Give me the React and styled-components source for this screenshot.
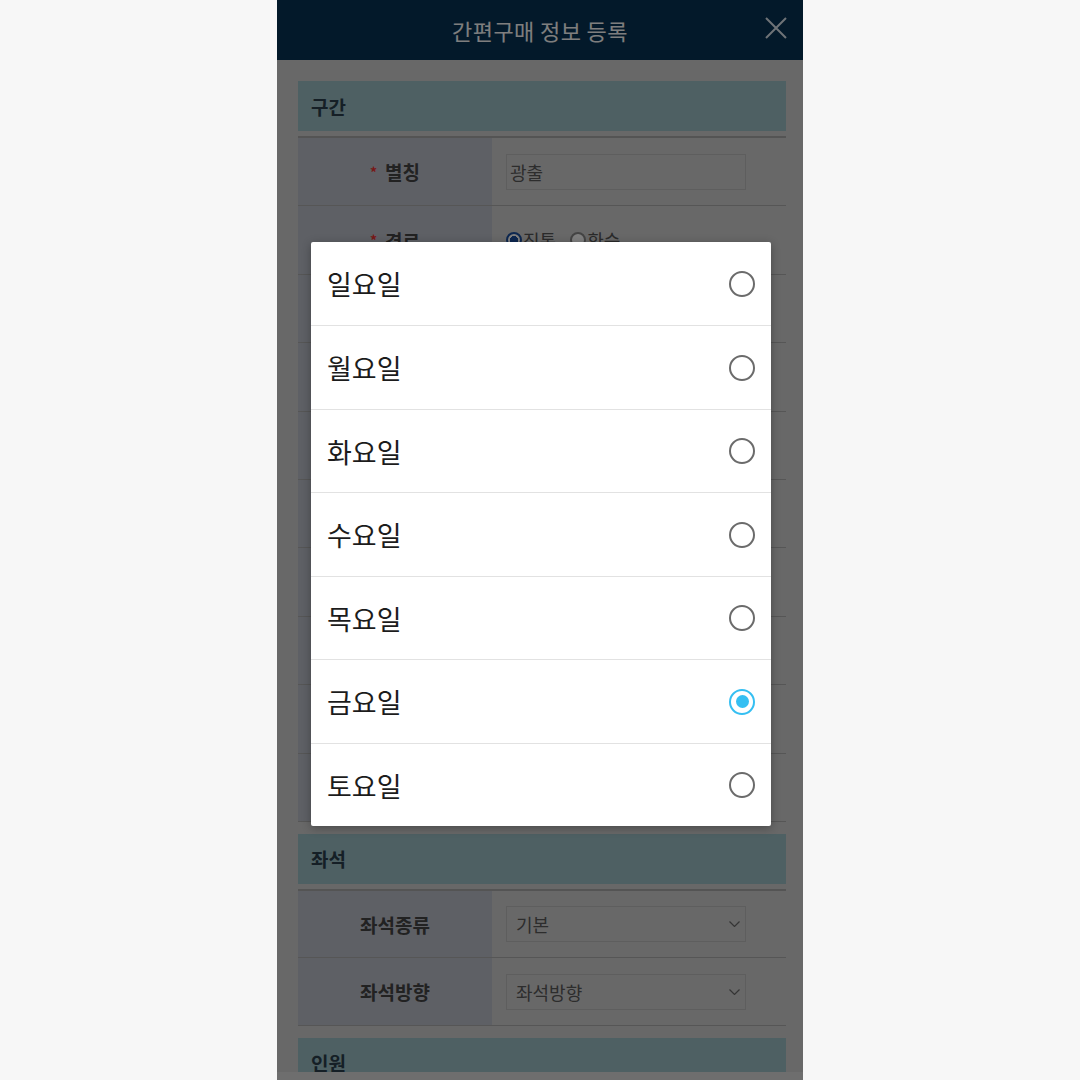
import styled, { createGlobalStyle } from "styled-components"
import { useState } from "react"

const GlobalStyle = createGlobalStyle`
    html, body {
        margin: 0;
        padding: 0;
        background-color: #f7f7f7;
        font-family: "Noto Sans CJK KR", "Noto Sans", sans-serif;
    }
    * {
        box-sizing: border-box;
    }
`

const days = ["일요일", "월요일", "화요일", "수요일", "목요일", "금요일", "토요일"]

const routeRows = [
    { label: "별칭", required: true, kind: "input", value: "광출" },
    { label: "경로", required: true, kind: "radio" },
    { label: "출발역", required: true, kind: "input", value: "서울" },
    { label: "도착역", required: true, kind: "input", value: "부산" },
    { label: "열차종류", required: false, kind: "select", value: "KTX" },
    { label: "출발시간", required: true, kind: "select", value: "07시" },
    { label: "요일", required: true, kind: "select", value: "금요일" },
    { label: "열차번호", required: false, kind: "input", value: "" },
    { label: "출발일", required: false, kind: "input", value: "" },
    { label: "반복", required: false, kind: "select", value: "매주" },
]

const seatRows = [
    { label: "좌석종류", kind: "select", value: "기본" },
    { label: "좌석방향", kind: "select", value: "좌석방향" },
]

function Chevron() {
    return (
        <svg width="11" height="6" viewBox="0 0 11 6">
            <polyline points="0.5,0.5 5.5,5.5 10.5,0.5" fill="none" stroke="#6a6a6a" strokeWidth="1.2" />
        </svg>
    )
}

function FormRow({ row, height }) {
    return (
        <Row height={height}>
            <Label>
                {row.required && <Star>*</Star>}
                {row.label}
            </Label>
            <Value>
                {row.kind === "input" && <Field>{row.value}</Field>}
                {row.kind === "select" && (
                    <Field select>
                        {row.value}
                        <Chevron />
                    </Field>
                )}
                {row.kind === "radio" && (
                    <RadioGroup>
                        <RadioItem><SmallRadio checked />직통</RadioItem>
                        <RadioItem><SmallRadio />환승</RadioItem>
                    </RadioGroup>
                )}
            </Value>
        </Row>
    )
}

export default function App() {
    const [selected, setSelected] = useState(5)

    return (
        <>
            <GlobalStyle />
            <Page>
                <Phone>
                    <Header>
                        <Title>간편구매 정보 등록</Title>
                        <Close>
                            <svg width="22" height="22" viewBox="0 0 22 22">
                                <path d="M1 1 L21 21 M21 1 L1 21" stroke="#dfe6ee" strokeWidth="2" />
                            </svg>
                        </Close>
                    </Header>
                    <Content>
                        <SectionTitle>구간</SectionTitle>
                        <Table>
                            {routeRows.map(r => <FormRow key={r.label} row={r} height={68.4} />)}
                        </Table>
                        <SectionTitle>좌석</SectionTitle>
                        <Table>
                            {seatRows.map(r => <FormRow key={r.label} row={r} height={67.5} />)}
                        </Table>
                        <SectionTitle>인원</SectionTitle>
                    </Content>
                    <BottomBar />
                    <Overlay>
                        <Dialog>
                            {days.map((d, i) => (
                                <DayOption key={d} onClick={() => setSelected(i)}>
                                    <DayName>{d}</DayName>
                                    <Radio checked={i === selected} />
                                </DayOption>
                            ))}
                        </Dialog>
                    </Overlay>
                </Phone>
            </Page>
        </>
    )
}

const Page = styled.div`
    display: flex;
    justify-content: center;
    height: 100vh;
`

const Phone = styled.div`
    position: relative;
    width: 526px;
    height: 1080px;
    display: flex;
    flex-direction: column;
    overflow: hidden;
    background-color: #d0d0d0;
`

const Header = styled.div`
    height: 60px;
    flex-shrink: 0;
    background-color: #063254;
    display: flex;
    align-items: center;
    justify-content: center;
    position: relative;
`

const Title = styled.h1`
    margin: 0;
    font-size: 22px;
    font-weight: 400;
    color: #fcfcfc;
    letter-spacing: 0.4px;
`

const Close = styled.div`
    position: absolute;
    right: 16px;
    top: 17px;
    display: flex;
`

const Content = styled.div`
    flex: 1;
    overflow: hidden;
    padding: 21px 17px 0 21px;
    display: flex;
    flex-direction: column;
`

const SectionTitle = styled.div`
    height: 50px;
    flex-shrink: 0;
    background-color: #9cc0c6;
    display: flex;
    align-items: center;
    padding-left: 13px;
    font-size: 19px;
    font-weight: 700;
    color: #2a3f4c;
`

const Table = styled.div`
    margin: 5px 0 12px;
    border-top: 2px solid #a8a8a8;
    display: flex;
    flex-direction: column;
    flex-shrink: 0;
`

const Row = styled.div`
    height: ${props => props.height}px;
    display: flex;
    border-bottom: 1px solid #acacac;
`

const Label = styled.div`
    width: 194px;
    background-color: #bcc0ca;
    display: flex;
    align-items: center;
    justify-content: center;
    font-size: 19px;
    font-weight: 700;
    color: #444;
`

const Star = styled.span`
    color: #f03030;
    font-size: 14px;
    margin-right: 8px;
`

const Value = styled.div`
    flex: 1;
    display: flex;
    align-items: center;
    padding-left: 14px;
`

const Field = styled.div`
    width: 240px;
    height: 36px;
    border: 1px solid #bdbdbd;
    display: flex;
    align-items: center;
    justify-content: space-between;
    padding: 0 5px 0 ${props => props.select ? "9px" : "3px"};
    font-size: 18px;
    color: #5a5a5a;
`

const RadioGroup = styled.div`
    display: flex;
    align-items: center;
    gap: 14px;
    font-size: 18px;
    color: #555;
`

const RadioItem = styled.label`
    display: flex;
    align-items: center;
    gap: 1px;
`

const SmallRadio = styled.span`
    width: 16px;
    height: 16px;
    border-radius: 50%;
    border: 2px solid ${props => props.checked ? "#1a4fa0" : "#888"};
    background: ${props => props.checked ? "radial-gradient(circle, #1a4fa0 45%, #fff 50%)" : "#fff"};
`

const BottomBar = styled.div`
    height: 8px;
    flex-shrink: 0;
    background-color: #dcdcdc;
`

const Overlay = styled.div`
    position: absolute;
    inset: 0;
    background-color: rgba(0, 0, 0, 0.5);
    display: flex;
    align-items: center;
    justify-content: center;
    padding: 0 0 12px 2px;
`

const Dialog = styled.div`
    width: 460px;
    background-color: #fff;
    border-radius: 2px;
    box-shadow: 0 2px 10px rgba(0, 0, 0, 0.3);
    display: flex;
    flex-direction: column;
`

const DayOption = styled.div`
    height: 83.5px;
    display: flex;
    align-items: center;
    justify-content: space-between;
    padding: 0 16px 0 16px;
    cursor: pointer;
    & + & {
        border-top: 1px solid #e2e2e2;
    }
`

const DayName = styled.span`
    font-size: 27px;
    color: #1c1c1c;
`

const Radio = styled.span`
    position: relative;
    width: 26px;
    height: 26px;
    border-radius: 50%;
    border: 2.5px solid ${props => props.checked ? "#35bff2" : "#6b6b6b"};
    &::after {
        content: "";
        display: ${props => props.checked ? "block" : "none"};
        position: absolute;
        left: 50%;
        top: 50%;
        width: 13px;
        height: 13px;
        margin: -6.5px 0 0 -6.5px;
        border-radius: 50%;
        background-color: #35bff2;
    }
`
